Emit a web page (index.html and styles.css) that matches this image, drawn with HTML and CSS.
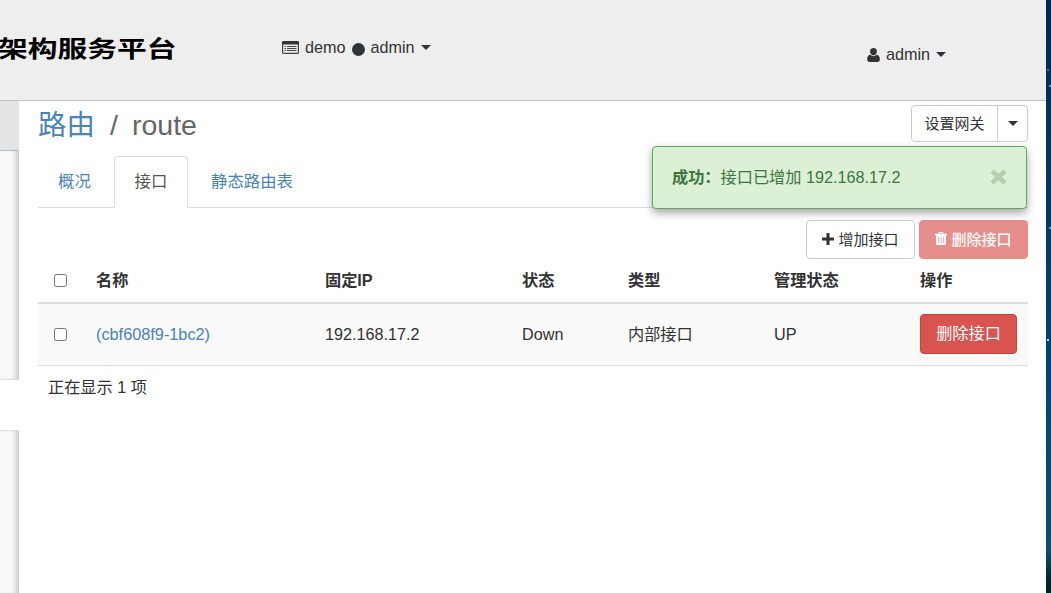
FILE: index.html
```html
<!DOCTYPE html>
<html lang="zh-CN">
<head>
<meta charset="utf-8">
<title>路由 / route</title>
<link rel="stylesheet" href="styles.css">
</head>
<body>
<div class="screen">
  <div class="window">
    <header class="topbar">
      <div class="brand">架构服务平台</div>
      <div class="project">
        <svg class="list-icon" width="17" height="13" viewBox="0 0 17 13"><rect x=".6" y=".6" width="15.8" height="11.8" rx="1" fill="none" stroke="#444" stroke-width="1.2"/><path d="M1 0h15l1 1v2.500H0V1z" fill="#333"/><path d="M2.500 5.500h1.500M5 5.500h9.500M2.500 7.500h1.500M5 7.500h9.500M2.500 9.500h1.500M5 9.500h9.500" stroke="#444" stroke-width="1"/></svg>
        <span class="domain">demo</span>
        <span class="dot"></span>
        <span>admin</span>
        <span class="caret"></span>
      </div>
      <div class="user">
        <svg width="13" height="14" viewBox="0 0 13 14"><path d="M6.5 0a3.5 3.5 0 0 1 3.4 3.6c0 2-1.5 3.9-3.4 3.9S3.100 5.600 3.100 3.600A3.500 3.500 0 0 1 6.500 0zM3.300 6.700C1 6.900.2 8.700.2 11.200.2 13 1 14 2.700 14h7.600c1.700 0 2.500-1 2.500-2.800 0-2.500-.8-4.300-3.100-4.500-1.900 1.900-4.500 1.900-6.400 0z" fill="#333"/></svg>
        <span>admin</span>
        <span class="caret"></span>
      </div>
    </header>
    <div class="body">
      <aside class="sidebar">
        <div class="side-title"></div>
        <div class="side-group"></div>
        <div class="side-current"></div>
        <div class="side-rest"></div>
      </aside>
      <main class="content">
        <div class="page-head">
          <h1><a>路由</a><span class="slash">/</span><span>route</span></h1>
          <div class="split"><button class="split-main">设置网关</button><button class="split-toggle"><span class="caret"></span></button></div>
        </div>
        <nav class="tabs">
          <a class="tab">概况</a><a class="tab active">接口</a><a class="tab">静态路由表</a>
        </nav>
        <div class="actions">
          <button class="btn"><svg width="12" height="12" viewBox="0 0 12 12"><path d="M4.500 0h3v4.500H12v3H7.500V12h-3V7.500H0v-3h4.500z" fill="#333"/></svg>增加接口</button>
          <button class="btn danger disabled"><svg width="12" height="13" viewBox="0 0 12 13"><path d="M4 0h4l.8 1.700H12V3.200H0V1.700h3.200zM4.500 1h3l.3.7H4.200z" fill="#fff" fill-rule="evenodd"/><path d="M1 3h10v8.500c0 1-.6 1.500-1.500 1.500h-7C1.600 13 1 12.500 1 11.500zM3.300 5v6h.7V5zM5.700 5v6h.7V5zM8 5v6h.7V5z" fill="#fff" fill-rule="evenodd"/></svg>删除接口</button>
        </div>
        <table>
          <thead>
            <tr><th class="c-check"><span class="check"></span></th><th class="c-name">名称</th><th class="c-ip">固定IP</th><th class="c-status">状态</th><th class="c-type">类型</th><th class="c-admin">管理状态</th><th>操作</th></tr>
          </thead>
          <tbody>
            <tr><td><span class="check"></span></td><td><a class="name-link">(cbf608f9-1bc2)</a></td><td>192.168.17.2</td><td>Down</td><td>内部接口</td><td>UP</td><td><button class="btn danger row-btn">删除接口</button></td></tr>
          </tbody>
        </table>
        <div class="count">正在显示 1 项</div>
      </main>
    </div>
    <div class="alert"><strong>成功：</strong><span>接口已增加 192.168.17.2</span>
      <svg class="close" width="17" height="16" viewBox="0 0 17 16"><path d="M2 2l13 12M15 2L2 14" stroke="#b4d1ae" stroke-width="4.600"/></svg>
    </div>
  </div>
  <div class="desktop"></div>
</div>
</body>
</html>
```
FILE: styles.css
```css
* { box-sizing: border-box; }
body {
  margin: 0;
  overflow: hidden;
  background: #fff;
  color: #333;
  font: 16.2px/23px "Liberation Sans", "Noto Sans CJK SC", sans-serif;
}
a { color: #4a83b8; }
button { font-family: inherit; color: inherit; margin: 0; }
svg { flex: none; }
.screen { display: flex; width: 1051px; height: 593px; }
.window { position: relative; width: 1046px; display: flex; flex-direction: column; }
.desktop {
  width: 5px;
  background:
    radial-gradient(circle at 2px 340px, #cfe8f8 0 1px, transparent 1.500px),
    radial-gradient(circle at 4px 86px, #5b94bd 0 1px, transparent 1.500px),
    radial-gradient(circle at 2px 70px, #386a92 0 1px, transparent 1.500px),
    radial-gradient(circle at 4px 228px, #6aa0c4 0 1px, transparent 1.500px),
    linear-gradient(#07264f, #073459 25%, #07436e 65%, #124d69 93%, #06212b 98%);
}
.topbar {
  display: flex;
  height: 101px;
  background: #eee;
  border-bottom: 1px solid #c4c4c4;
}
.brand {
  width: 282px;
  padding-top: 34px;
  color: #000;
  font: 700 25px/30px "Noto Sans CJK SC", sans-serif;
  white-space: nowrap;
  transform: scale(1.190, .9);
  transform-origin: 0 34px;
  margin-left: -2px;
}
.project { display: flex; align-items: center; height: 23px; margin: 36px 0 0 2px; }
.domain { margin-left: 6px; }
.dot { width: 13px; height: 13px; margin: 4px 6px 0 6px; border-radius: 50%; background: #303238; }
.caret { border: 5px solid transparent; border-top-color: #333; border-bottom: 0; margin-left: 6px; }
.user { display: flex; align-items: center; gap: 6px; height: 23px; margin: 43px 100px 0 auto; }
.user .caret { margin-left: 0; }
.body { display: flex; flex: 1; }
.sidebar { display: flex; flex-direction: column; width: 19px; }
.side-title { height: 50px; background: #e3e4e6; border-bottom: 1px solid #bbb; }
.side-group { height: 229px; background: #f9f9f9; border-bottom: 1px solid #ddd; box-shadow: inset -6px 0 6px -4px #bbb; }
.side-current { height: 50px; }
.side-rest { flex: 1; background: #f9f9f9; border-top: 1px solid #ddd; box-shadow: inset -6px 0 6px -4px #bbb; }
.content { width: 1009px; padding: 4px 0 0 19px; }
.page-head { display: flex; justify-content: space-between; height: 51px; }
h1 { display: flex; margin: 0; color: #666; font-size: 28.500px; font-weight: 400; line-height: 40px; }
.slash { margin: 0 14px 0 15px; }
.split { display: flex; height: 37px; border: 1px solid #ccc; border-radius: 4px; }
.split button { background: none; border: 0; padding: 0; }
.split .split-main { width: 85px; padding-bottom: 2px; font-size: 15px; }
.split .split-toggle { display: flex; align-items: center; justify-content: center; width: 30px; border-left: 1px solid #ccc; }
.split .caret { margin: 0; }
.tabs { display: flex; height: 52px; border-bottom: 1px solid #ddd; white-space: nowrap; }
.tab { height: 52px; padding: 14px 23px 0 23px; font-size: 16.400px; }
.tab.active { width: 74px; padding: 13px 19.500px; color: #555; background: #fff; border: 1px solid #ddd; border-bottom: 0; border-radius: 4px 4px 0 0; }
.tab:first-child { width: 76px; padding-left: 20px; }
.actions { display: flex; justify-content: flex-end; gap: 4px; padding-top: 12px; }
.btn {
  display: flex; align-items: center; justify-content: center; gap: 4px;
  width: 109px; height: 39px; padding: 0 0 2px;
  border: 1px solid #ccc; border-radius: 4px; background: #fff;
  font-size: 15px;
}
.btn.danger { color: #fff; background: #d9534f; border-color: #c64340; }
.btn.disabled { opacity: .65; border-color: #d9534f; font-weight: 500; }
.btn.row-btn { width: 97px; height: 40px; padding-bottom: 4px; font-size: 16.200px; }
table { width: 990px; table-layout: fixed; border-collapse: collapse; }
th, td { padding: 0; text-align: left; }
th { height: 44px; border-bottom: 2px solid #ddd; }
td { height: 62px; background: #f9f9f9; border-bottom: 1px solid #ddd; }
.c-check { width: 58px; }
.c-name { width: 229px; }
.c-ip { width: 197px; }
.c-status { width: 106px; }
.c-type { width: 146px; }
.c-admin { width: 146px; }
.name-link { font-size: 16.300px; }
.check { display: block; width: 13px; height: 13px; margin-left: 16px; background: #fff; border: 1px solid #767676; border-radius: 2.500px; }
.count { padding: 10px; }
.alert {
  position: absolute; left: 652px; top: 146px;
  display: flex; align-items: center;
  width: 375px; height: 63px; padding: 0 19px;
  color: #3c763d; background: #dcf0d6;
  border: 1px solid #5fa761; border-radius: 4px;
  box-shadow: 0 4px 9px rgba(0, 0, 0, .35);
}
.close { margin: 0 0 2px auto; }
```
